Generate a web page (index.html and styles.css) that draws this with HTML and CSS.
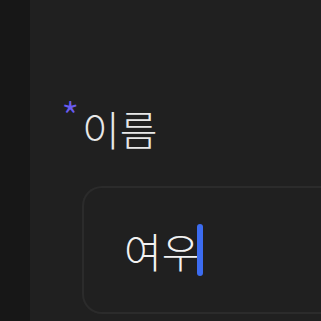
FILE: index.html
```html
<!DOCTYPE html>
<html lang="ko">
<head>
    <meta charset="UTF-8">
    <meta name="viewport" content="width=device-width, initial-scale=1.0">
    <title>이름</title>
    <link rel="stylesheet" href="styles.css">
</head>
<body>
    <div class="sidebar"></div>
    <div class="main">
        <div class="field">
            <label class="field-label"><span class="required">*</span>이름</label>
            <div class="text-box">
                <span class="value">여우</span><span class="caret"></span>
            </div>
        </div>
    </div>
</body>
</html>
```

FILE: styles.css
```css
body {
    margin: 0;
    padding: 0;
    height: 100vh;
    display: flex;
    background-color: #202020;
    font-family: "Noto Sans CJK KR", "Noto Sans", sans-serif;
    color: #e8e8e8;
    overflow: hidden;
}
.sidebar {
    width: 30px;
    flex-shrink: 0;
    background-color: #171717;
}
.main {
    flex-grow: 1;
    padding: 98px 0 0 52px;
}
.field {
    display: flex;
    flex-direction: column;
}
.field-label {
    display: flex;
    align-items: flex-start;
    font-size: 41px;
    font-weight: 300;
    line-height: 60px;
    margin-bottom: 28px;
}
.required {
    color: #6a5cf0;
    font-size: 42px;
    line-height: 42px;
    margin: -3px 1px 0 -21px;
    width: 20px;
}
.text-box {
    height: 124px;
    border: 2px solid #2b2b2b;
    border-right: none;
    border-radius: 20px 0 0 20px;
    display: flex;
    align-items: center;
    padding-left: 40px;
}
.value {
    font-size: 41px;
    font-weight: 300;
    line-height: 52px;
    color: #f2f2f2;
}
.caret {
    width: 6px;
    height: 52px;
    margin-left: -2px;
    border-radius: 3px;
    background-color: #3c6cf0;
}
```
